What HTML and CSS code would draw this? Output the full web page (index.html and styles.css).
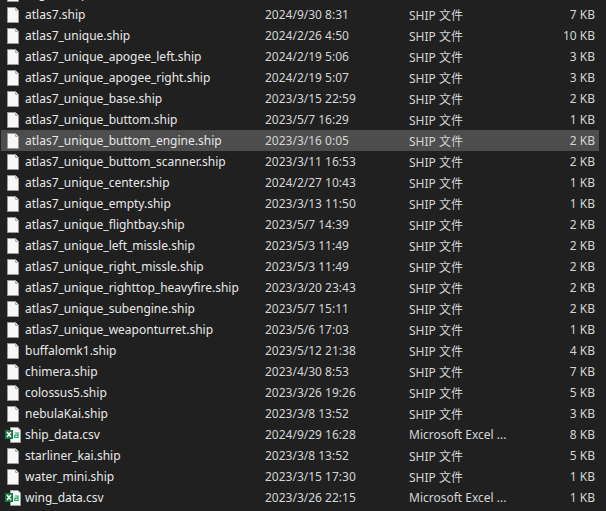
FILE: index.html
```html
<!DOCTYPE html>
<html lang="en">
<head>
  <meta charset="UTF-8" />
  <title>Files</title>
  <link rel="stylesheet" href="styles.css">
</head>
<body>

<svg class="defs" width="0" height="0">
  <symbol id="file-ship" viewBox="0 0 16 16">
    <path d="M2.5 .5H10.5L13.5 3.5V15.5H2.5Z" fill="#f8f8f8" stroke="#9a9a9a"/>
    <path d="M10.5 .5V3.5H13.5" fill="#dcdcdc" stroke="#b0b0b0"/>
  </symbol>
  <symbol id="file-excel" viewBox="0 0 16 16">
    <path d="M5.5 .5H13L15.5 3V15.5H5.5Z" fill="#f7f7f7" stroke="#a0a0a0"/>
    <path d="M9.8 6H13V10.5H9.8V8.2H13" fill="none" stroke="#21a366" stroke-width="1.2"/>
    <rect x="0" y="3" width="8" height="9" fill="#107c41"/>
    <path d="M2 5L6 10M6 5L2 10" stroke="#fff" stroke-width="1.5"/>
  </symbol>
</svg>

<main class="file-list">
  <div class="file-row"><svg class="file-icon"><use href="#file-ship"/></svg><span class="file-name">aegis2.ship</span></div>
  <div class="file-row"><svg class="file-icon"><use href="#file-ship"/></svg><span class="file-name">atlas7.ship</span><span class="file-date">2024/9/30 8:31</span><span class="file-type">SHIP 文件</span><span class="file-size">7 KB</span></div>
  <div class="file-row"><svg class="file-icon"><use href="#file-ship"/></svg><span class="file-name">atlas7_unique.ship</span><span class="file-date">2024/2/26 4:50</span><span class="file-type">SHIP 文件</span><span class="file-size">10 KB</span></div>
  <div class="file-row"><svg class="file-icon"><use href="#file-ship"/></svg><span class="file-name">atlas7_unique_apogee_left.ship</span><span class="file-date">2024/2/19 5:06</span><span class="file-type">SHIP 文件</span><span class="file-size">3 KB</span></div>
  <div class="file-row"><svg class="file-icon"><use href="#file-ship"/></svg><span class="file-name">atlas7_unique_apogee_right.ship</span><span class="file-date">2024/2/19 5:07</span><span class="file-type">SHIP 文件</span><span class="file-size">3 KB</span></div>
  <div class="file-row"><svg class="file-icon"><use href="#file-ship"/></svg><span class="file-name">atlas7_unique_base.ship</span><span class="file-date">2023/3/15 22:59</span><span class="file-type">SHIP 文件</span><span class="file-size">2 KB</span></div>
  <div class="file-row"><svg class="file-icon"><use href="#file-ship"/></svg><span class="file-name">atlas7_unique_buttom.ship</span><span class="file-date">2023/5/7 16:29</span><span class="file-type">SHIP 文件</span><span class="file-size">1 KB</span></div>
  <div class="file-row selected"><svg class="file-icon"><use href="#file-ship"/></svg><span class="file-name">atlas7_unique_buttom_engine.ship</span><span class="file-date">2023/3/16 0:05</span><span class="file-type">SHIP 文件</span><span class="file-size">2 KB</span></div>
  <div class="file-row"><svg class="file-icon"><use href="#file-ship"/></svg><span class="file-name">atlas7_unique_buttom_scanner.ship</span><span class="file-date">2023/3/11 16:53</span><span class="file-type">SHIP 文件</span><span class="file-size">2 KB</span></div>
  <div class="file-row"><svg class="file-icon"><use href="#file-ship"/></svg><span class="file-name">atlas7_unique_center.ship</span><span class="file-date">2024/2/27 10:43</span><span class="file-type">SHIP 文件</span><span class="file-size">1 KB</span></div>
  <div class="file-row"><svg class="file-icon"><use href="#file-ship"/></svg><span class="file-name">atlas7_unique_empty.ship</span><span class="file-date">2023/3/13 11:50</span><span class="file-type">SHIP 文件</span><span class="file-size">1 KB</span></div>
  <div class="file-row"><svg class="file-icon"><use href="#file-ship"/></svg><span class="file-name">atlas7_unique_flightbay.ship</span><span class="file-date">2023/5/7 14:39</span><span class="file-type">SHIP 文件</span><span class="file-size">2 KB</span></div>
  <div class="file-row"><svg class="file-icon"><use href="#file-ship"/></svg><span class="file-name">atlas7_unique_left_missle.ship</span><span class="file-date">2023/5/3 11:49</span><span class="file-type">SHIP 文件</span><span class="file-size">2 KB</span></div>
  <div class="file-row"><svg class="file-icon"><use href="#file-ship"/></svg><span class="file-name">atlas7_unique_right_missle.ship</span><span class="file-date">2023/5/3 11:49</span><span class="file-type">SHIP 文件</span><span class="file-size">2 KB</span></div>
  <div class="file-row"><svg class="file-icon"><use href="#file-ship"/></svg><span class="file-name">atlas7_unique_righttop_heavyfire.ship</span><span class="file-date">2023/3/20 23:43</span><span class="file-type">SHIP 文件</span><span class="file-size">2 KB</span></div>
  <div class="file-row"><svg class="file-icon"><use href="#file-ship"/></svg><span class="file-name">atlas7_unique_subengine.ship</span><span class="file-date">2023/5/7 15:11</span><span class="file-type">SHIP 文件</span><span class="file-size">2 KB</span></div>
  <div class="file-row"><svg class="file-icon"><use href="#file-ship"/></svg><span class="file-name">atlas7_unique_weaponturret.ship</span><span class="file-date">2023/5/6 17:03</span><span class="file-type">SHIP 文件</span><span class="file-size">1 KB</span></div>
  <div class="file-row"><svg class="file-icon"><use href="#file-ship"/></svg><span class="file-name">buffalomk1.ship</span><span class="file-date">2023/5/12 21:38</span><span class="file-type">SHIP 文件</span><span class="file-size">4 KB</span></div>
  <div class="file-row"><svg class="file-icon"><use href="#file-ship"/></svg><span class="file-name">chimera.ship</span><span class="file-date">2023/4/30 8:53</span><span class="file-type">SHIP 文件</span><span class="file-size">7 KB</span></div>
  <div class="file-row"><svg class="file-icon"><use href="#file-ship"/></svg><span class="file-name">colossus5.ship</span><span class="file-date">2023/3/26 19:26</span><span class="file-type">SHIP 文件</span><span class="file-size">5 KB</span></div>
  <div class="file-row"><svg class="file-icon"><use href="#file-ship"/></svg><span class="file-name">nebulaKai.ship</span><span class="file-date">2023/3/8 13:52</span><span class="file-type">SHIP 文件</span><span class="file-size">3 KB</span></div>
  <div class="file-row"><svg class="file-icon"><use href="#file-excel"/></svg><span class="file-name">ship_data.csv</span><span class="file-date">2024/9/29 16:28</span><span class="file-type">Microsoft Excel ...</span><span class="file-size">8 KB</span></div>
  <div class="file-row"><svg class="file-icon"><use href="#file-ship"/></svg><span class="file-name">starliner_kai.ship</span><span class="file-date">2023/3/8 13:52</span><span class="file-type">SHIP 文件</span><span class="file-size">5 KB</span></div>
  <div class="file-row"><svg class="file-icon"><use href="#file-ship"/></svg><span class="file-name">water_mini.ship</span><span class="file-date">2023/3/15 17:30</span><span class="file-type">SHIP 文件</span><span class="file-size">1 KB</span></div>
  <div class="file-row"><svg class="file-icon"><use href="#file-excel"/></svg><span class="file-name">wing_data.csv</span><span class="file-date">2023/3/26 22:15</span><span class="file-type">Microsoft Excel ...</span><span class="file-size">1 KB</span></div>
</main>

</body>
</html>
```

FILE: styles.css
```css
* { box-sizing: border-box; margin: 0; padding: 0; }
html, body { height: 100%; overflow: hidden; }
body { background-color: #202020; color: #e8e8e8; font-family: "Noto Sans", "Noto Sans CJK SC", sans-serif; font-size: 12px; }
.defs { display: block; height: 0; }
.file-list { margin-top: -17px; padding: 0 7px 0 1px; }
.file-row { display: flex; align-items: center; height: 21px; white-space: nowrap; }
.file-row.selected { background-color: #4d4d4d; }
.file-icon { width: 16px; height: 16px; margin-left: 4px; margin-right: 4px; flex: none; }
.file-name { width: 240px; }
.file-date { width: 144px; color: #d4d4d4; }
.file-type { width: 136px; color: #d4d4d4; }
.file-size { width: 50px; text-align: right; color: #d4d4d4; }
```
